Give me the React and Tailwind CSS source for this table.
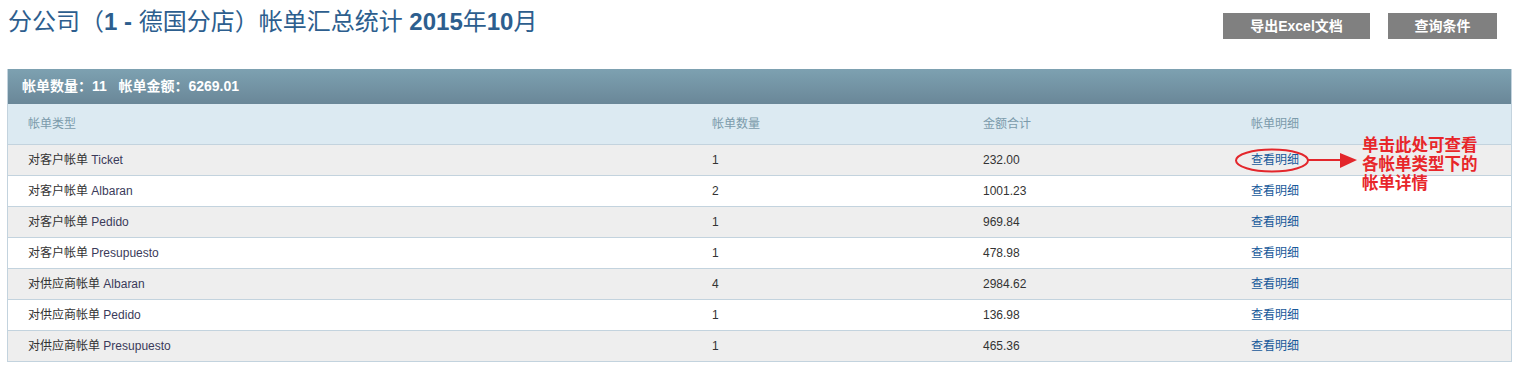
import React from "react";

const rows = [
  ["对客户帐单", "Ticket", "1", "232.00"],
  ["对客户帐单", "Albaran", "2", "1001.23"],
  ["对客户帐单", "Pedido", "1", "969.84"],
  ["对客户帐单", "Presupuesto", "1", "478.98"],
  ["对供应商帐单", "Albaran", "4", "2984.62"],
  ["对供应商帐单", "Pedido", "1", "136.98"],
  ["对供应商帐单", "Presupuesto", "1", "465.36"],
];

const font = { fontFamily: 'Arial, "Liberation Sans", "Noto Sans CJK SC", sans-serif' };

export default function App() {
  return (
    <div className="relative w-[1515px] h-[369px] bg-white" style={font}>
      <div className="flex items-start justify-between pl-[8px] pr-[18px] pt-[7px] h-[69px]">
        <h1 className="text-[24px] leading-[30px] text-[#2d5e8e] font-normal">
          分公司（<span className="font-bold">1 - </span>德国分店）帐单汇总统计 <span className="font-bold">2015</span>年<span className="font-bold">10</span>月
        </h1>
        <div className="flex gap-[18px] mt-[6px]">
          <div className="w-[147px] h-[26px] bg-[#808080] text-white text-[14px] font-bold flex items-center justify-center">导出Excel文档</div>
          <div className="w-[109px] h-[26px] bg-[#808080] text-white text-[14px] font-bold flex items-center justify-center">查询条件</div>
        </div>
      </div>
      <div className="ml-[7px] mr-[3px] border-l border-r border-[#c3d3de]">
        <div className="h-[35px] bg-gradient-to-b from-[#7da1b1] to-[#6a8798] text-white text-[14px] font-bold flex items-center pl-[14px]">
          帐单数量：11&nbsp;&nbsp;&nbsp;帐单金额：6269.01
        </div>
        <div className="grid grid-cols-[684px_271px_268px_1fr] h-[41px] bg-[#dceaf2] border-b border-[#c3d3de] items-center text-[12px] text-[#7b9bab]">
          <div className="pl-[20px]">帐单类型</div>
          <div className="pl-[20px]">帐单数量</div>
          <div className="pl-[20px]">金额合计</div>
          <div className="pl-[20px]">帐单明细</div>
        </div>
        {rows.map((r, i) => (
          <div
            key={i}
            className={`grid grid-cols-[684px_271px_268px_1fr] h-[31px] border-b border-[#c3d3de] items-center text-[12px] text-[#333333] ${i % 2 === 0 ? "bg-[#eeeeee]" : "bg-white"}`}
          >
            <div className="pl-[20px]">{r[0]} <span className="text-[#3a3a5a]">{r[1]}</span></div>
            <div className="pl-[20px]">{r[2]}</div>
            <div className="pl-[20px]">{r[3]}</div>
            <div className="pl-[20px] text-[#17599a]">查看明细</div>
          </div>
        ))}
      </div>
      <svg className="absolute left-[1230px] top-[140px]" width="130" height="40" viewBox="0 0 130 40">
        <ellipse cx="42" cy="20.5" rx="36" ry="11" fill="none" stroke="#e3262b" strokeWidth="2" />
        <line x1="78" y1="20" x2="112" y2="20" stroke="#e3262b" strokeWidth="2" />
        <polygon points="110,13 127,20 110,28" fill="#e3262b" />
      </svg>
      <div className="absolute left-[1362px] top-[136px] text-[16.5px] leading-[19px] font-bold text-[#e8262a]">
        <div>单击此处可查看</div>
        <div>各帐单类型下的</div>
        <div>帐单详情</div>
      </div>
    </div>
  );
}
